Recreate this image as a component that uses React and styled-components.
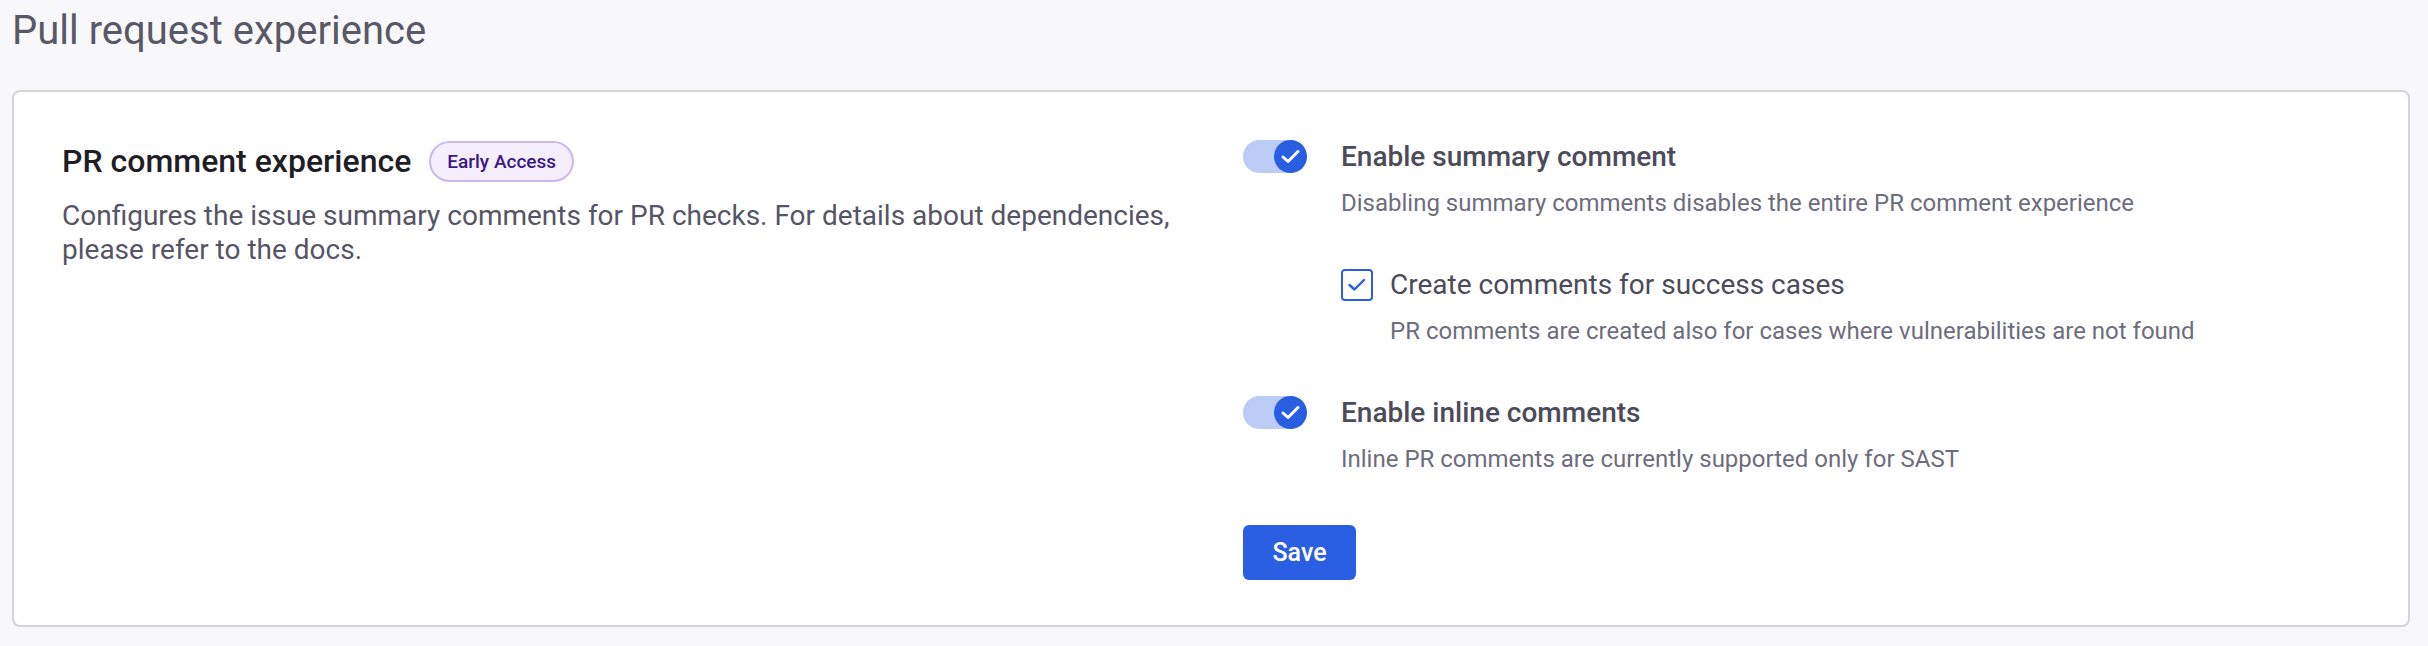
import React, { useState } from 'react'
import styled, { createGlobalStyle } from 'styled-components'

const GlobalStyle = createGlobalStyle`
  html, body {
    margin: 0;
    padding: 0;
    background: #f8f8fa;
    font-family: Roboto, 'Noto Sans', Arial, sans-serif;
  }
`

const Page = styled.div`
  padding: 0 18px 0 12px;
`

const PageTitle = styled.h1`
  margin: 0;
  padding-top: 7px;
  height: 83px;
  font-size: 40px;
  line-height: 48px;
  font-weight: 400;
  color: #595866;
`

const Card = styled.section`
  background: #fff;
  border: 2px solid #d3d3da;
  border-radius: 8px;
  padding: 47px 48px 45px;
  display: grid;
  grid-template-columns: 1fr 1fr;
  column-gap: 64px;
`

const TitleRow = styled.div`
  display: flex;
  align-items: center;
  gap: 18px;
  height: 40px;
  margin-top: 2px;
`

const SectionTitle = styled.h2`
  margin: 0;
  font-size: 32px;
  line-height: 40px;
  font-weight: 500;
  color: #1f1e26;
`

const Badge = styled.span`
  display: inline-flex;
  align-items: center;
  height: 37px;
  padding: 0 16px;
  border: 2px solid #cdb7f0;
  border-radius: 999px;
  background: #f4eefd;
  color: #3b1888;
  font-size: 19px;
  font-weight: 500;
`

const Description = styled.p`
  margin: 18px 0 0;
  font-size: 28px;
  line-height: 34px;
  color: #565565;
  max-width: 1110px;
`

const Settings = styled.div`
  display: flex;
  flex-direction: column;
  gap: 48px;
  align-items: flex-start;
`

const Setting = styled.div`
  display: flex;
  align-items: flex-start;
  gap: ${p => (p.$nested ? '17px' : '34px')};
`

const Body = styled.div`
  display: flex;
  flex-direction: column;
`

const Label = styled.div`
  font-size: 28px;
  font-weight: ${p => (p.$strong ? 500 : 400)};
  line-height: 36px;
  color: #4c4b59;
`

const Hint = styled.div`
  margin-top: 12px;
  font-size: 24px;
  line-height: 32px;
  color: #6e6d7c;
`

const Nested = styled.div`
  margin-top: 48px;
`

const Track = styled.button`
  flex: none;
  margin-top: 1px;
  width: 64px;
  height: 33px;
  padding: 0;
  border: none;
  border-radius: 999px;
  background: ${p => (p.$on ? '#bccbf5' : '#d6d6dd')};
  display: flex;
  justify-content: ${p => (p.$on ? 'flex-end' : 'flex-start')};
  cursor: pointer;
`

const Knob = styled.span`
  width: 33px;
  height: 33px;
  border-radius: 50%;
  background: ${p => (p.$on ? '#2a5ee2' : '#fff')};
  display: flex;
  align-items: center;
  justify-content: center;
`

const Box = styled.button`
  flex: none;
  margin-top: 2px;
  width: 32px;
  height: 32px;
  padding: 0;
  border: 2px solid #2b5fe3;
  border-radius: 4px;
  background: #fff;
  display: flex;
  align-items: center;
  justify-content: center;
  cursor: pointer;
`

const SaveButton = styled.button`
  margin-top: 2px;
  width: 113px;
  height: 55px;
  border: none;
  border-radius: 6px;
  background: #2b5fe3;
  color: #fff;
  font-family: inherit;
  font-size: 25px;
  font-weight: 500;
  cursor: pointer;
`

function Toggle({ on, onClick }) {
  return (
    <Track $on={on} onClick={onClick}>
      <Knob $on={on}>
        {on && (
          <svg width="33" height="33" viewBox="0 0 33 33">
            <polyline points="9,17 14,21.5 24,11.5" fill="none" stroke="#fff" strokeWidth="3" strokeLinecap="round" strokeLinejoin="round" />
          </svg>
        )}
      </Knob>
    </Track>
  )
}

function Checkbox({ checked, onClick }) {
  return (
    <Box onClick={onClick}>
      {checked && (
        <svg width="28" height="28" viewBox="0 0 28 28">
          <polyline points="6.5,14 11.5,18.5 21,9" fill="none" stroke="#2b5fe3" strokeWidth="2.4" strokeLinecap="round" strokeLinejoin="round" />
        </svg>
      )}
    </Box>
  )
}

export default function App() {
  const [summary, setSummary] = useState(true)
  const [success, setSuccess] = useState(true)
  const [inline, setInline] = useState(true)

  return (
    <Page>
      <GlobalStyle />
      <PageTitle>Pull request experience</PageTitle>
      <Card>
        <div>
          <TitleRow>
            <SectionTitle>PR comment experience</SectionTitle>
            <Badge>Early Access</Badge>
          </TitleRow>
          <Description>
            Configures the issue summary comments for PR checks. For details about dependencies, please refer to the docs.
          </Description>
        </div>
        <Settings>
          <Setting>
            <Toggle on={summary} onClick={() => setSummary(!summary)} />
            <Body>
              <Label $strong>Enable summary comment</Label>
              <Hint>Disabling summary comments disables the entire PR comment experience</Hint>
              <Nested>
                <Setting $nested>
                  <Checkbox checked={success} onClick={() => setSuccess(!success)} />
                  <Body>
                    <Label>Create comments for success cases</Label>
                    <Hint>PR comments are created also for cases where vulnerabilities are not found</Hint>
                  </Body>
                </Setting>
              </Nested>
            </Body>
          </Setting>
          <Setting>
            <Toggle on={inline} onClick={() => setInline(!inline)} />
            <Body>
              <Label $strong>Enable inline comments</Label>
              <Hint>Inline PR comments are currently supported only for SAST</Hint>
            </Body>
          </Setting>
          <SaveButton>Save</SaveButton>
        </Settings>
      </Card>
    </Page>
  )
}
